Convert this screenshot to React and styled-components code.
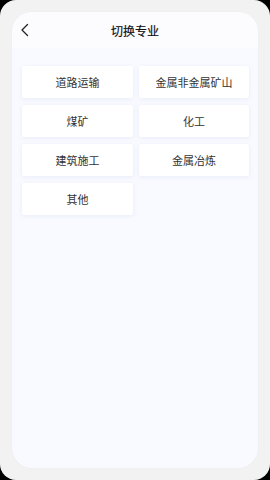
import React from 'react'
import styled, { createGlobalStyle } from 'styled-components'

const GlobalStyle = createGlobalStyle`
  html, body {
    margin: 0;
    padding: 0;
    background: #000;
  }
  * { box-sizing: border-box; }
`

const majors = ['道路运输', '金属非金属矿山', '煤矿', '化工', '建筑施工', '金属冶炼', '其他']

function App() {
  return (
    <>
      <GlobalStyle />
      <Device>
        <Screen>
          <Header>
            <BackButton aria-label="back">
              <svg width="10" height="14" viewBox="0 0 10 14" fill="none">
                <path d="M7.5 1.5L2 7l5.5 5.5" stroke="#222" strokeWidth="1.3" strokeLinecap="round" strokeLinejoin="round" />
              </svg>
            </BackButton>
            <Title>切换专业</Title>
          </Header>
          <Body>
            <Grid>
              {majors.map((m) => (
                <MajorCard key={m}>{m}</MajorCard>
              ))}
            </Grid>
          </Body>
        </Screen>
      </Device>
    </>
  )
}

const Device = styled.div`
  width: 270px;
  height: 480px;
  background: #f2f2f2;
  border-radius: 16px;
  padding: 12px;
  font-family: "Noto Sans CJK SC", "Noto Sans", sans-serif;
`

const Screen = styled.div`
  height: 456px;
  border-radius: 20px;
  overflow: hidden;
  background: #f9faff;
  display: flex;
  flex-direction: column;
  box-shadow: 0 0 2px rgba(0, 0, 0, 0.04);
`

const Header = styled.header`
  position: relative;
  height: 36px;
  background: #fcfcff;
  display: flex;
  align-items: center;
  justify-content: center;
`

const BackButton = styled.button`
  position: absolute;
  left: 8px;
  top: 11px;
  padding: 0;
  border: none;
  background: none;
  display: flex;
`

const Title = styled.h1`
  margin: 0;
  font-size: 12px;
  font-weight: 400;
  color: #111;
  padding-top: 1px;
  -webkit-text-stroke: 0.2px #111;
`

const Body = styled.main`
  flex: 1;
  padding: 18px 10px 0 10px;
`

const Grid = styled.div`
  display: grid;
  grid-template-columns: 111px 110px;
  column-gap: 6px;
  row-gap: 7px;
`

const MajorCard = styled.button`
  height: 32px;
  border: none;
  border-radius: 2px;
  background: #fff;
  box-shadow: 0 1px 4px rgba(200, 210, 235, 0.35);
  font-family: inherit;
  font-size: 11px;
  color: #333;
  display: flex;
  align-items: center;
  justify-content: center;
`

export default App
